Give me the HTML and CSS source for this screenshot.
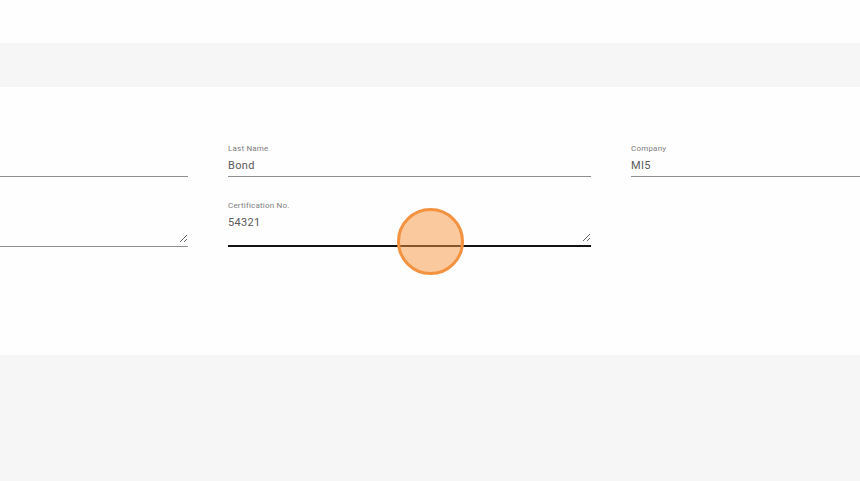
FILE: index.html
```html
<!DOCTYPE html>
<html lang="en">
<head>
<meta charset="utf-8">
<title>Profile form</title>
<link rel="stylesheet" href="styles.css">
</head>
<body>
<div class="top-bar"></div>
<div class="band"></div>
<main class="panel">
  <form class="form-grid">
    <label class="field"><span class="field-label"></span><input class="field-input" type="text" aria-label="First field"></label>
    <label class="field"><span class="field-label">Last Name</span><input class="field-input" type="text" value="Bond"></label>
    <label class="field"><span class="field-label">Company</span><input class="field-input" type="text" value="MI5"></label>
    <label class="field"><span class="field-label"></span><span class="area-wrap"><textarea class="field-area" aria-label="Second field"></textarea></span></label>
    <label class="field focused"><span class="field-label">Certification No.</span><span class="area-wrap"><textarea class="field-area">54321</textarea></span>
      <span class="click-marker"></span></label>
  </form>
</main>
<div class="footer-band"></div>
</body>
</html>
```
FILE: styles.css
```css
* { box-sizing: border-box; }
html, body { margin: 0; padding: 0; height: 481px; overflow: hidden; }
body { background: #f6f6f6; font-family: Roboto, "Liberation Sans", sans-serif; color: #555; display: flex; flex-direction: column; }
.top-bar { height: 43px; background: #fefefe; }
.band { height: 44px; background: #f6f6f6; }
.panel { height: 268px; background: #fefefe; padding-top: 57px; overflow: hidden; }
.footer-band { flex: 1; background: #f6f6f6; }
.form-grid { display: grid; grid-template-columns: repeat(3, 363px); column-gap: 40px; row-gap: 24px; margin-left: -175px; width: 1169px; }
.field { display: flex; flex-direction: column; position: relative; }
.field-label { font-size: 8px; line-height: 10px; height: 10px; color: #808080; letter-spacing: .2px; }
.field-input, .field-area { display: block; width: 100%; border: 0; border-radius: 0; outline: 0; background: transparent; padding: 0; margin: 0; font: 400 11px/14px Roboto, "Liberation Sans", sans-serif; letter-spacing: .33px; color: #5a5a5a; }
.field-input { height: 23px; padding-top: 4px; padding-bottom: 4px; border-bottom: 1px solid #8f8f8f; }
.area-wrap { display: block; height: 36px; padding-bottom: 3px; border-bottom: 1px solid #8f8f8f; }
.field-area { height: 32px; padding-top: 5px; resize: vertical; }
.focused .area-wrap { border-bottom: 2px solid #141414; }
.focused .field-area { height: 31px; }
.click-marker { position: absolute; left: 169px; top: 7px; width: 67px; height: 67px; border-radius: 50%; background: rgba(248, 148, 62, .5); border: 3px solid #f39241; }
```
